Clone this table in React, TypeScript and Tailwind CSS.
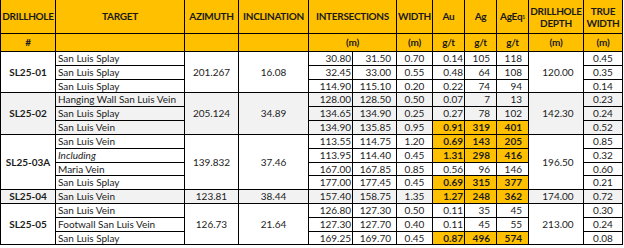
import React from "react";

type Row = {
  target: string;
  italic?: boolean;
  from: string;
  to: string;
  width: string;
  au: string;
  ag: string;
  ageq: string;
  tw: string;
  hl?: boolean;
};

type Group = {
  id: string;
  az: string;
  inc: string;
  depth: string;
  gray?: boolean;
  rows: Row[];
};

const groups: Group[] = [
  {
    id: "SL25-01",
    az: "201.267",
    inc: "16.08",
    depth: "120.00",
    rows: [
      { target: "San Luis Splay", from: "30.80", to: "31.50", width: "0.70", au: "0.14", ag: "105", ageq: "118", tw: "0.45" },
      { target: "San Luis Splay", from: "32.45", to: "33.00", width: "0.55", au: "0.48", ag: "64", ageq: "108", tw: "0.35" },
      { target: "San Luis Splay", from: "114.90", to: "115.10", width: "0.20", au: "0.22", ag: "74", ageq: "94", tw: "0.14" },
    ],
  },
  {
    id: "SL25-02",
    az: "205.124",
    inc: "34.89",
    depth: "142.30",
    gray: true,
    rows: [
      { target: "Hanging Wall San Luis Vein", from: "128.00", to: "128.50", width: "0.50", au: "0.07", ag: "7", ageq: "13", tw: "0.23" },
      { target: "San Luis Splay", from: "134.65", to: "134.90", width: "0.25", au: "0.27", ag: "78", ageq: "102", tw: "0.24" },
      { target: "San Luis Vein", from: "134.90", to: "135.85", width: "0.95", au: "0.91", ag: "319", ageq: "401", tw: "0.52", hl: true },
    ],
  },
  {
    id: "SL25-03A",
    az: "139.832",
    inc: "37.46",
    depth: "196.50",
    rows: [
      { target: "San Luis Vein", from: "113.55", to: "114.75", width: "1.20", au: "0.69", ag: "143", ageq: "205", tw: "0.85", hl: true },
      { target: "Including", italic: true, from: "113.95", to: "114.40", width: "0.45", au: "1.31", ag: "298", ageq: "416", tw: "0.32", hl: true },
      { target: "Maria Vein", from: "167.00", to: "167.85", width: "0.85", au: "0.56", ag: "96", ageq: "146", tw: "0.60" },
      { target: "San Luis Splay", from: "177.00", to: "177.45", width: "0.45", au: "0.69", ag: "315", ageq: "377", tw: "0.21", hl: true },
    ],
  },
  {
    id: "SL25-04",
    az: "123.81",
    inc: "38.44",
    depth: "174.00",
    gray: true,
    rows: [
      { target: "San Luis Vein", from: "157.40", to: "158.75", width: "1.35", au: "1.27", ag: "248", ageq: "362", tw: "0.72", hl: true },
    ],
  },
  {
    id: "SL25-05",
    az: "126.73",
    inc: "21.64",
    depth: "213.00",
    rows: [
      { target: "San Luis Vein", from: "126.80", to: "127.30", width: "0.50", au: "0.11", ag: "35", ageq: "45", tw: "0.30" },
      { target: "Footwall San Luis Vein", from: "127.30", to: "127.70", width: "0.40", au: "0.11", ag: "45", ageq: "55", tw: "0.24" },
      { target: "San Luis Splay", from: "169.25", to: "169.70", width: "0.45", au: "0.87", ag: "496", ageq: "574", tw: "0.08", hl: true },
    ],
  },
];

const spanClass: Record<number, string> = {
  1: "row-span-1",
  3: "row-span-3",
  4: "row-span-4",
};

function H({ children, className = "" }: { children?: React.ReactNode; className?: string }) {
  return (
    <div
      className={`bg-[#FFC000] flex items-center justify-center text-center font-bold text-[#1a1a1a] leading-[11px] tracking-[-0.3px] whitespace-nowrap ${className}`}
    >
      {children}
    </div>
  );
}

function C({
  children,
  bg,
  className = "",
}: {
  children?: React.ReactNode;
  bg: string;
  className?: string;
}) {
  return (
    <div className={`${bg} flex items-center leading-[13px] text-[#1c1c1c] whitespace-nowrap overflow-hidden ${className}`}>
      {children}
    </div>
  );
}

export default function App() {
  return (
    <div className="w-[624px] h-[248px] bg-white" style={{ fontFamily: "Lato, 'Liberation Sans', sans-serif" }}>
      <div className="w-[623px] bg-black gap-px px-px pb-px grid text-[10px] grid-cols-[54px_128px_53px_69px_43px_43px_35px_31px_31px_31px_54px_38px] grid-rows-[33px_17px_13px_13px_12px_13px_13px_13px_13px_13px_12px_13px_13px_13px_13px_12px]">
        {/* header row 1 */}
        <H>DRILLHOLE</H>
        <H>TARGET</H>
        <H>AZIMUTH</H>
        <H>INCLINATION</H>
        <H className="col-span-2">INTERSECTIONS</H>
        <H>WIDTH</H>
        <H>Au</H>
        <H>Ag</H>
        <H>
          <span>
            AgEq<sup className="text-[5px] relative -top-[1px]">1</sup>
          </span>
        </H>
        <H className="flex-col pt-[1px]">
          <span>DRILLHOLE</span>
          <span className="mt-[1px]">DEPTH</span>
        </H>
        <H className="flex-col pt-[1px]">
          <span>TRUE</span>
          <span className="mt-[1px]">WIDTH</span>
        </H>
        {/* header row 2 */}
        <H>#</H>
        <H />
        <H />
        <H />
        <H className="col-span-2">(m)</H>
        <H>(m)</H>
        <H>g/t</H>
        <H>g/t</H>
        <H>g/t</H>
        <H>(m)</H>
        <H>(m)</H>
        {/* data */}
        {groups.map((g) => {
          const bg = g.gray ? "bg-[#F2F2F2]" : "bg-white";
          const n = g.rows.length;
          return g.rows.map((r, i) => {
            const hbg = r.hl ? "bg-[#FFC000] font-bold" : bg;
            return (
              <React.Fragment key={g.id + i}>
                {i === 0 && (
                  <C bg={bg} className={`${spanClass[n]} justify-center font-bold`}>
                    {g.id}
                  </C>
                )}
                <C bg={bg} className={`pl-[2px] ${r.italic ? "italic" : ""}`}>
                  {r.target}
                </C>
                {i === 0 && (
                  <C bg={bg} className={`${spanClass[n]} justify-center`}>
                    {g.az}
                  </C>
                )}
                {i === 0 && (
                  <C bg={bg} className={`${spanClass[n]} justify-center`}>
                    {g.inc}
                  </C>
                )}
                <C bg={bg} className="justify-end pr-[1px]">
                  {r.from}
                </C>
                <C bg={bg} className="justify-end pr-[5px]">
                  {r.to}
                </C>
                <C bg={bg} className="justify-center">
                  {r.width}
                </C>
                <C bg={hbg} className="justify-end pr-[1px]">
                  {r.au}
                </C>
                <C bg={hbg} className="justify-end pr-[6px]">
                  {r.ag}
                </C>
                <C bg={hbg} className="justify-end pr-[6px]">
                  {r.ageq}
                </C>
                {i === 0 && (
                  <C bg={bg} className={`${spanClass[n]} justify-center pl-[4px]`}>
                    {g.depth}
                  </C>
                )}
                <C bg={bg} className="justify-center">
                  {r.tw}
                </C>
              </React.Fragment>
            );
          });
        })}
      </div>
    </div>
  );
}
